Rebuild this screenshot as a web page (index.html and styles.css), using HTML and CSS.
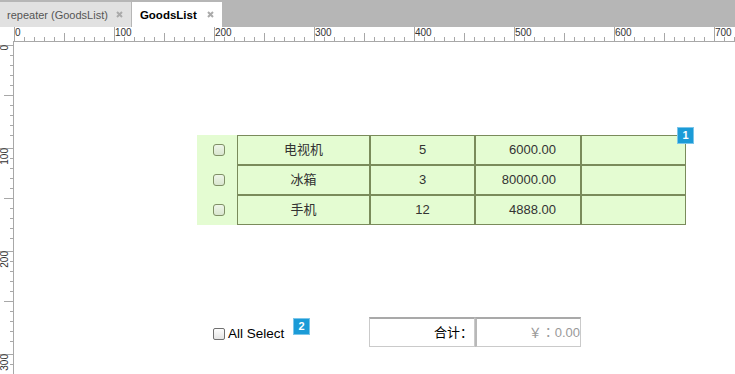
FILE: index.html
```html
<!DOCTYPE html>
<html lang="zh">
<head>
    <meta charset="UTF-8">
    <title>GoodsList</title>
    <link rel="stylesheet" href="styles.css">
</head>
<body>
    <div class="tabbar">
        <div class="tab tab-inactive">
            <span>repeater (GoodsList)</span>
            <svg class="tab-close" width="7" height="7" viewBox="0 0 7 7"><path d="M1 1L6 6M6 1L1 6"/></svg>
        </div>
        <div class="tab tab-active">
            <span>GoodsList</span>
            <svg class="tab-close" width="7" height="7" viewBox="0 0 7 7"><path d="M1 1L6 6M6 1L1 6"/></svg>
        </div>
    </div>

    <div class="ruler-row">
        <div class="ruler-corner"></div>
        <div class="hruler">
            <div class="hmark"><span>0</span></div>
            <div class="hmark"><span>100</span></div>
            <div class="hmark"><span>200</span></div>
            <div class="hmark"><span>300</span></div>
            <div class="hmark"><span>400</span></div>
            <div class="hmark"><span>500</span></div>
            <div class="hmark"><span>600</span></div>
            <div class="hmark"><span>700</span></div>
        </div>
    </div>

    <div class="workspace">
        <div class="vruler">
            <div class="vmark"><span>0</span></div>
            <div class="vmark"><span>100</span></div>
            <div class="vmark"><span>200</span></div>
            <div class="vmark"><span>300</span></div>
        </div>

        <div class="canvas">
            <!-- repeater: GoodsList -->
            <div class="repeater">
                <div class="goods-row">
                    <div class="cell-check"><input type="checkbox" class="goods-check"></div>
                    <div class="cell cell-name">电视机</div>
                    <div class="cell cell-qty">5</div>
                    <div class="cell cell-price">6000.00</div>
                    <div class="cell cell-extra"></div>
                </div>
                <div class="goods-row">
                    <div class="cell-check"><input type="checkbox" class="goods-check"></div>
                    <div class="cell cell-name">冰箱</div>
                    <div class="cell cell-qty">3</div>
                    <div class="cell cell-price">80000.00</div>
                    <div class="cell cell-extra"></div>
                </div>
                <div class="goods-row">
                    <div class="cell-check"><input type="checkbox" class="goods-check"></div>
                    <div class="cell cell-name">手机</div>
                    <div class="cell cell-qty">12</div>
                    <div class="cell cell-price">4888.00</div>
                    <div class="cell cell-extra"></div>
                </div>
                <span class="badge badge-1">1</span>
            </div>

            <label class="select-all"><input type="checkbox" class="all-check">All Select</label>
            <span class="badge badge-2">2</span>

            <div class="total">
                <div class="total-label">合计：</div>
                <div class="total-value">￥：0.00</div>
            </div>
        </div>
    </div>
</body>
</html>
```

FILE: styles.css
```css
body {
    margin: 0;
    width: 735px;
    height: 374px;
    overflow: hidden;
    background-color: #fff;
    font-family: "Liberation Sans", Arial, "Noto Sans CJK SC", sans-serif;
}

/* tabs */
.tabbar {
    display: flex;
    align-items: flex-end;
    height: 27px;
    background-color: #b6b6b6;
}

.tab {
    display: flex;
    align-items: center;
    height: 25px;
    gap: 8px;
    padding: 0 8px 0 7px;
    font-size: 11px;
}

.tab-inactive {
    background-color: #e1e1e1;
    color: #555;
}

.tab-active {
    margin-left: 1px;
    gap: 10px;
    padding: 0 8px;
    background-color: #fff;
    color: #000;
    font-size: 11.5px;
    font-weight: bold;
}

.tab-close {
    stroke: #aaa;
    stroke-width: 2;
}

/* rulers */
.ruler-row {
    display: flex;
    height: 15px;
}

.ruler-corner {
    width: 13px;
}

.hruler {
    flex: 1;
    display: flex;
    height: 14px;
    padding-left: 1px;
    overflow: hidden;
    border-bottom: 1px solid #a8a8a8;
}

.hmark {
    flex: 0 0 100px;
    box-sizing: border-box;
    padding-left: 1px;
    font-size: 10px;
    line-height: 12px;
    color: #333;
    background:
        linear-gradient(#a8a8a8, #a8a8a8) 0 0 / 1px 100% no-repeat,
        linear-gradient(#a8a8a8, #a8a8a8) 50px 100% / 1px 8px no-repeat,
        repeating-linear-gradient(to right, #a8a8a8 0 1px, transparent 1px 10px) 0 100% / 100% 4px no-repeat;
}

.workspace {
    display: flex;
    height: 332px;
}

.vruler {
    width: 13px;
    overflow: hidden;
    border-right: 1px solid #a8a8a8;
}

.vmark {
    height: 100px;
    background:
        linear-gradient(#a8a8a8, #a8a8a8) 0 0 / 100% 1px no-repeat,
        linear-gradient(#a8a8a8, #a8a8a8) 100% 50px / 9px 1px no-repeat,
        repeating-linear-gradient(to bottom, #a8a8a8 0 1px, transparent 1px 10px) 100% 0 / 3px 100% no-repeat;
}

.vmark span {
    display: block;
    width: 10px;
    margin-top: 3px;
    writing-mode: vertical-rl;
    transform: rotate(180deg);
    font-size: 10px;
    line-height: 10px;
    color: #333;
}

/* canvas: widgets sit at their design coordinates */
.canvas {
    position: relative;
    flex: 1;
    overflow: hidden;
}

.repeater {
    position: absolute;
    left: 183px;
    top: 93px;
}

.goods-row {
    display: flex;
    height: 30px;
}

.cell-check {
    display: flex;
    align-items: center;
    width: 40px;
    padding-left: 16px;
    box-sizing: border-box;
    background-color: #e4fcd2;
}

.goods-check {
    appearance: none;
    width: 12px;
    height: 12px;
    margin: 0;
    border: 1px solid #7f8f66;
    border-radius: 3px;
    background: linear-gradient(#eef6e8, #d9e5cf);
}

.cell {
    box-sizing: border-box;
    border: 1px solid #7a8b5b;
    background-color: #e4fcd2;
    font-size: 13px;
    line-height: 28px;
    color: #333;
}

.cell-name {
    width: 133px;
    text-align: center;
}

.cell-qty {
    width: 105px;
    text-align: center;
}

.cell-price {
    width: 106px;
    padding-right: 24px;
    text-align: right;
}

.cell-extra {
    width: 105px;
}

.badge {
    position: absolute;
    width: 17px;
    height: 17px;
    box-sizing: border-box;
    border: 1px solid #7cc6ea;
    background-color: #1b9bd7;
    color: #fff;
    font-size: 11px;
    font-weight: bold;
    line-height: 15px;
    text-align: center;
}

.badge-1 {
    top: -8px;
    right: -8px;
}

.badge-2 {
    left: 279px;
    top: 276px;
}

.select-all {
    position: absolute;
    left: 199px;
    top: 284px;
    display: flex;
    align-items: center;
    gap: 3px;
    font-size: 13.5px;
    color: #000;
}

.all-check {
    appearance: none;
    width: 12px;
    height: 12px;
    margin: 0;
    border: 1px solid #707070;
    border-radius: 2px;
    background: linear-gradient(#fdfdfd, #e4e4e4);
}

.total {
    position: absolute;
    left: 355px;
    top: 275px;
    display: flex;
    font-family: "Liberation Sans", Arial, "Noto Sans CJK TC", sans-serif;
    font-size: 13px;
}

.total-label,
.total-value {
    width: 106px;
    height: 30px;
    box-sizing: border-box;
    border: 1px solid #cacaca;
    border-top: 2px solid #a9a9a9;
    line-height: 27px;
    text-align: right;
    white-space: nowrap;
}

.total-label {
    padding-right: 1px;
    color: #000;
}

.total-value {
    border-left: 2px solid #b8b8b8;
    color: #999;
}
```
